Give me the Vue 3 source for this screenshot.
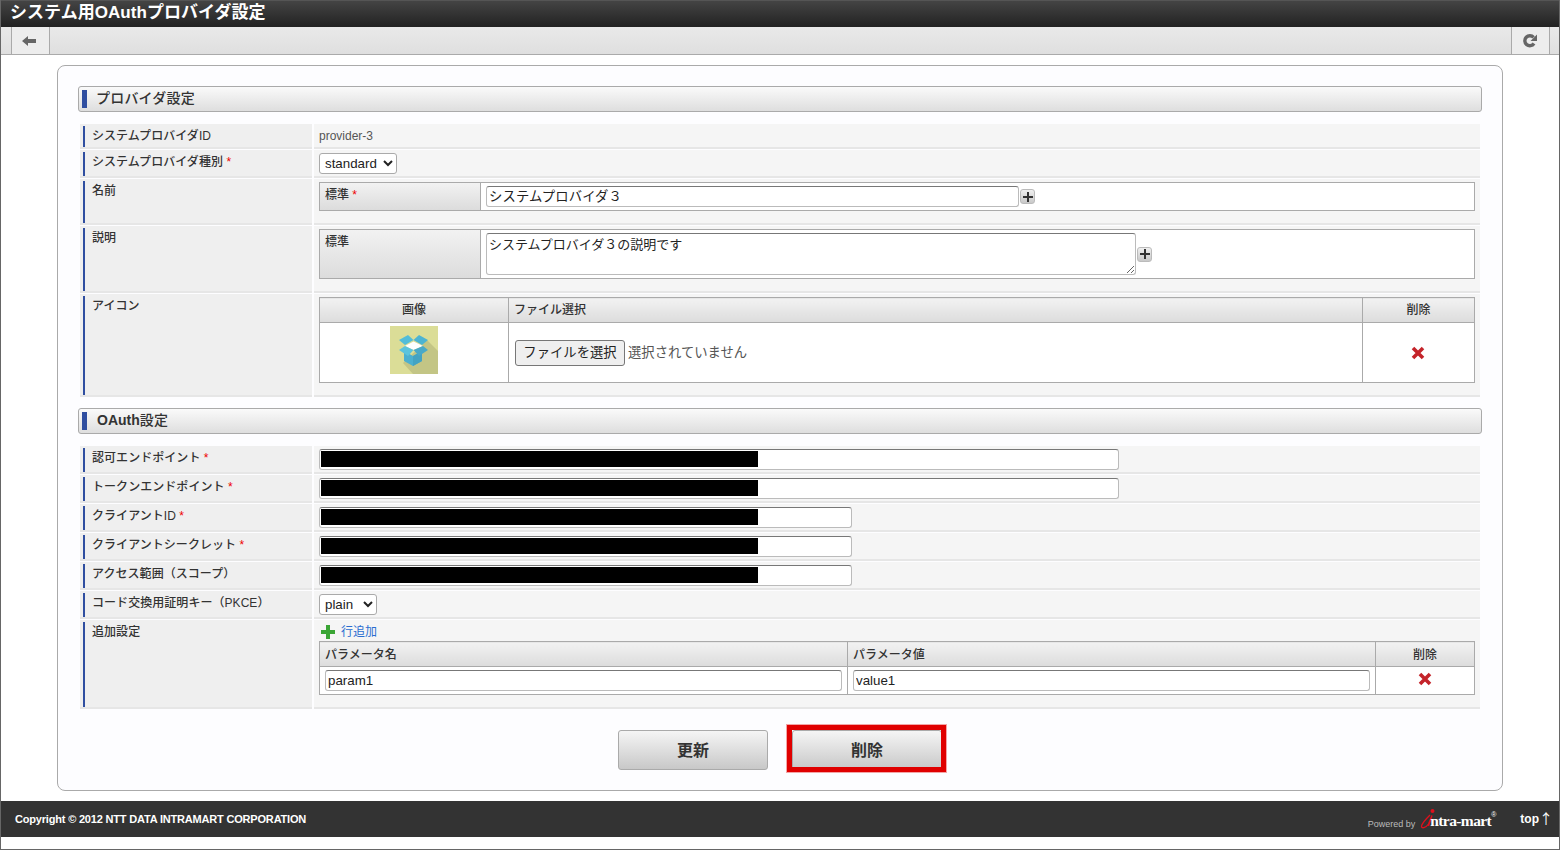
<script setup>
const oauthRows = [
  { label: '認可エンドポイント', wide: true },
  { label: 'トークンエンドポイント', wide: true },
  { label: 'クライアントID', wide: false },
  { label: 'クライアントシークレット', wide: false },
  { label: 'アクセス範囲（スコープ）', wide: false, optional: true },
]
</script>

<template>
  <div class="page">
    <header class="title-bar">システム用OAuthプロバイダ設定</header>

    <nav class="toolbar">
      <a class="tool-btn back">
        <svg width="14" height="10" viewBox="0 0 14 10"><path d="M0 5 6 0V3h8v4H6v3z" fill="#666" /></svg>
      </a>
      <a class="tool-btn reload">
        <svg width="14" height="14" viewBox="0 0 14 14">
          <path d="M11 9.500A5 5 0 1 1 10.600 3.400" fill="none" stroke="#666" stroke-width="3.400" />
          <path d="M14 .5V7H7.500z" fill="#666" />
        </svg>
      </a>
    </nav>

    <main class="panel">
      <h2 class="section"><span>プロバイダ設定</span></h2>

      <div class="rows">
        <div class="row">
          <div class="label"><div>システムプロバイダID</div></div>
          <div class="value plain-text">provider-3</div>
        </div>
        <div class="row">
          <div class="label"><div>システムプロバイダ種別 <i>*</i></div></div>
          <div class="value">
            <select class="sel sel-type"><option>standard</option></select>
          </div>
        </div>
        <div class="row">
          <div class="label"><div>名前</div></div>
          <div class="value tall">
            <div class="locale-box name-box">
              <div class="locale-head">標準 <i>*</i></div>
              <div class="locale-body">
                <input class="txt name-input" value="システムプロバイダ３" />
                <button class="plus"><svg width="10" height="10" viewBox="0 0 10 10"><path d="M4 0h2v4h4v2H6v4H4V6H0V4h4z" fill="#333" /></svg></button>
              </div>
            </div>
          </div>
        </div>
        <div class="row">
          <div class="label"><div>説明</div></div>
          <div class="value tall">
            <div class="locale-box desc-box">
              <div class="locale-head">標準</div>
              <div class="locale-body">
                <textarea class="txt desc-input">システムプロバイダ３の説明です</textarea>
                <button class="plus"><svg width="10" height="10" viewBox="0 0 10 10"><path d="M4 0h2v4h4v2H6v4H4V6H0V4h4z" fill="#333" /></svg></button>
              </div>
            </div>
          </div>
        </div>
        <div class="row">
          <div class="label"><div>アイコン</div></div>
          <div class="value tall">
            <table class="grid-table icon-table">
              <thead>
                <tr>
                  <th class="col-image center">画像</th>
                  <th>ファイル選択</th>
                  <th class="col-del center">削除</th>
                </tr>
              </thead>
              <tbody>
                <tr>
                  <td class="center img-cell">
                    <svg class="box-icon" width="48" height="48" viewBox="0 0 48 48">
                      <rect width="48" height="48" fill="#dbdd97" />
                      <path d="M37 14 48 25V48H23L13 37z" fill="#c3c585" />
                      <path d="M14 25 23 30 32 25V35L23 40 14 35z" fill="#4cb0cf" />
                      <path d="M23 30 32 25V35L23 40z" fill="#44a3c2" />
                      <path d="M9 14 18 9 23.500 14 15 19z" fill="#52bdd9" />
                      <path d="M38 14 29 9 23.500 14 32 19z" fill="#4db4d2" />
                      <path d="M15 20 23.500 15.500 33 20 23.500 24z" fill="#fff" />
                      <path d="M9 24 15 20 23.500 24 18 30z" fill="#5cc4dc" />
                      <path d="M38 24 33 20 23.500 24 29 30z" fill="#4aa9c7" />
                    </svg>
                  </td>
                  <td class="file-cell">
                    <div class="file-pick">
                      <button class="file-btn">ファイルを選択</button>
                      <span>選択されていません</span>
                    </div>
                  </td>
                  <td class="center">
                    <svg class="del-x left" width="14" height="14" viewBox="0 0 14 14"><path d="M2 2 12 12M12 2 2 12" stroke="#c4242a" stroke-width="3.600" /></svg>
                  </td>
                </tr>
              </tbody>
            </table>
          </div>
        </div>
      </div>

      <h2 class="section second"><span><b>OAuth</b>設定</span></h2>

      <div class="rows">
        <div v-for="row in oauthRows" :key="row.label" class="row">
          <div class="label">
            <div>{{ row.label }} <i v-if="!row.optional">*</i></div>
          </div>
          <div class="value">
            <div class="masked" :class="{ wide: row.wide }">
              <input class="txt" value="" />
              <span class="mask"></span>
            </div>
          </div>
        </div>
        <div class="row">
          <div class="label"><div>コード交換用証明キー（PKCE）</div></div>
          <div class="value">
            <select class="sel sel-pkce"><option>plain</option></select>
          </div>
        </div>
        <div class="row">
          <div class="label"><div>追加設定</div></div>
          <div class="value tall">
            <a class="add-row">
              <svg width="14" height="14" viewBox="0 0 14 14"><path d="M5 0h4v5h5v4H9v5H5V9H0V5h5z" fill="#3aa535" /></svg>
              <span>行追加</span>
            </a>
            <table class="grid-table param-table">
              <thead>
                <tr>
                  <th class="col-param">パラメータ名</th>
                  <th class="col-param">パラメータ値</th>
                  <th class="center">削除</th>
                </tr>
              </thead>
              <tbody>
                <tr>
                  <td><input class="txt" value="param1" /></td>
                  <td><input class="txt" value="value1" /></td>
                  <td class="center">
                    <svg class="del-x up" width="14" height="14" viewBox="0 0 14 14"><path d="M2 2 12 12M12 2 2 12" stroke="#c4242a" stroke-width="3.600" /></svg>
                  </td>
                </tr>
              </tbody>
            </table>
          </div>
        </div>
      </div>

      <div class="actions">
        <button class="action">更新</button>
        <div class="marked">
          <button class="action">削除</button>
          <span class="mark"></span>
        </div>
      </div>
    </main>

    <footer class="footer">
      <span class="copyright">Copyright © 2012 NTT DATA INTRAMART CORPORATION</span>
      <span class="powered">Powered by</span>
      <span class="logo">
        <svg width="20" height="22" viewBox="0 0 20 22">
          <circle cx="12.500" cy="3" r="2" fill="#e0101c" />
          <path d="M10 7C6 11 2 15 1.500 18 1 21 6 20 8.500 16L12 7.500 8.500 18" fill="none" stroke="#e0101c" stroke-width="1.300" />
        </svg>
        <span class="logo-text">ntra-mart</span><sup>®</sup>
      </span>
      <a class="top">top <b>↑</b></a>
    </footer>
  </div>
</template>

<style>
html,
body {
  margin: 0;
  background: #fff;
}
</style>

<style scoped>
.page {
  box-sizing: border-box;
  width: 1560px;
  height: 850px;
  display: flex;
  flex-direction: column;
  border: 1px solid #666;
  border-top: 0;
  overflow: hidden;
  background: #fff;
  color: #333;
  font-family: "Liberation Sans", "Noto Sans CJK JP", sans-serif;
  font-size: 12px;
}

.title-bar {
  height: 27px;
  box-sizing: border-box;
  padding-left: 9px;
  border-top: 1px solid #555;
  background: linear-gradient(#444, #222);
  color: #fff;
  font-size: 17px;
  font-weight: 700;
  letter-spacing: 0.05px;
  line-height: 24px;
}

.toolbar {
  height: 28px;
  box-sizing: border-box;
  display: flex;
  justify-content: space-between;
  padding: 0 9px 0 10px;
  border-bottom: 1px solid #aaa;
  background: linear-gradient(#e9e9e9, #dfdfdf);
}
.tool-btn {
  width: 37px;
  display: flex;
  align-items: center;
  justify-content: center;
  border-left: 1px solid #aaa;
  border-right: 1px solid #aaa;
  background: #ededed;
}
.tool-btn.back svg {
  margin: 1px 3px 0 0;
}
.tool-btn.reload svg {
  margin-right: 2px;
}

.panel {
  height: 726px;
  box-sizing: border-box;
  margin: 10px 56px 0;
  padding: 20px 20px 20px;
  border: 1px solid #aaa;
  border-radius: 8px;
  background: #fdfdff;
}

.section {
  height: 26px;
  box-sizing: border-box;
  margin: 0 0 12px;
  padding: 3px 0 0 3px;
  border: 1px solid #aaa;
  border-radius: 3px;
  background: linear-gradient(#fafafa, #dedede);
  font-size: 14px;
  font-weight: 500;
  letter-spacing: 0.2px;
}
.section span {
  display: block;
  height: 18px;
  padding-left: 9px;
  border-left: 5px solid #2f4ea0;
  line-height: 16px;
}
.section b {
  padding-left: 1px;
  font-weight: 700;
  letter-spacing: 0;
}
.section.second {
  margin-top: 11px;
}

.rows {
  margin: 0 2px;
}
.row {
  display: grid;
  grid-template-columns: 232px 1166px;
  gap: 2px;
  margin-bottom: 1px;
}
.label {
  display: flex;
  padding: 2px 0 0 3px;
  border-bottom: 2px solid #e6e6e6;
  background: #efefef;
}
.label > div {
  flex: 1;
  padding: 1px 0 0 7px;
  border-left: 2px solid #2f4ea0;
  font-weight: 500;
  letter-spacing: 0.05px;
  line-height: 18px;
}
.label i,
.locale-head i {
  color: #e00;
  font-style: normal;
}
.value {
  box-sizing: border-box;
  padding: 3px 5px 2px;
  border-bottom: 2px solid #e6e6e6;
  background: #f5f5f5;
}
.value.tall {
  padding-bottom: 12px;
}
.plain-text {
  padding: 4px 5px 2px;
  color: #555;
  line-height: 17px;
}

.sel {
  display: block;
  height: 21px;
  box-sizing: border-box;
  padding: 0 0 0 1px;
  border: 1px solid #aaa;
  border-radius: 3px;
  background: #fff;
  color: #222;
  font: 13.33px "Liberation Sans", sans-serif;
}
.sel-type {
  width: 78px;
}
.sel-pkce {
  width: 58px;
}

.txt {
  display: block;
  width: 100%;
  height: 21px;
  box-sizing: border-box;
  margin: 0;
  padding: 0 2px 1px;
  border: 1px solid #bbb;
  border-top-color: #777;
  border-radius: 3px;
  background: #fff;
  color: #222;
  font: 13.33px "Liberation Sans", "Noto Sans CJK JP", sans-serif;
  outline: none;
}

.locale-box {
  display: flex;
  box-sizing: border-box;
  width: 1156px;
  border: 1px solid #aaa;
  background: #fff;
}
.name-box {
  height: 29px;
}
.desc-box {
  height: 50px;
}
.locale-head {
  width: 161px;
  box-sizing: border-box;
  padding: 3px 5px;
  border-right: 1px solid #aaa;
  background: linear-gradient(#f2f2f2, #dcdcdc);
  font-weight: 500;
  line-height: 18px;
}
.locale-body {
  display: flex;
  align-items: center;
  gap: 1px;
  padding-left: 5px;
}
.name-input {
  width: 533px;
  padding-bottom: 3px;
  letter-spacing: 0.15px;
}
.desc-input {
  width: 650px;
  height: 42px;
  padding-top: 0;
  font-size: 13px;
  resize: both;
}
.plus {
  width: 15px;
  height: 15px;
  display: flex;
  align-items: center;
  justify-content: center;
  padding: 0;
  border: 1px solid #bbb;
  border-radius: 3px;
  background: linear-gradient(#f0f0f0, #c8c8c8);
}

.grid-table {
  width: 1156px;
  table-layout: fixed;
  border-collapse: collapse;
  background: #fff;
}
.grid-table th,
.grid-table td {
  box-sizing: border-box;
  padding: 0 5px;
  border: 1px solid #aaa;
}
.grid-table th {
  height: 25px;
  padding-bottom: 3px;
  background: linear-gradient(#f2f2f2, #dcdcdc);
  font-weight: 500;
  text-align: left;
}
.grid-table th.center,
.grid-table td.center {
  text-align: center;
}
.col-image {
  width: 189px;
}
.col-del {
  width: 112px;
}
.icon-table td {
  height: 60px;
}
.icon-table td.img-cell {
  padding-top: 3px;
  vertical-align: top;
}
.icon-table td.file-cell {
  padding-left: 6px;
}
.box-icon {
  display: block;
  margin: 0 auto;
}
.del-x {
  display: block;
  margin: 0 auto;
}
.del-x.left {
  padding-right: 2px;
}
.del-x.up {
  margin-bottom: 3px;
}
.file-pick {
  display: flex;
  align-items: center;
  gap: 3px;
  color: #555;
  font-size: 13.33px;
}
.file-pick span {
  padding-bottom: 3px;
}
.file-btn {
  width: 110px;
  height: 26px;
  padding: 0 0 3px;
  border: 1px solid #777;
  border-radius: 3px;
  background: #efefef;
  color: #222;
  font: 13.33px "Noto Sans CJK JP", sans-serif;
}

.masked {
  position: relative;
  width: 533px;
}
.masked.wide {
  width: 800px;
}
.mask {
  position: absolute;
  left: 2px;
  top: 2px;
  width: 437px;
  height: 16px;
  background: #000;
}

.add-row {
  display: flex;
  align-items: center;
  gap: 6px;
  height: 18px;
  padding-left: 2px;
  color: #2a6dd0;
}
.add-row span {
  margin-bottom: 3px;
}
.col-param {
  width: 528px;
}
.param-table th {
  padding-bottom: 1px;
}
.param-table td {
  height: 28px;
}

.actions {
  display: flex;
  justify-content: center;
  gap: 24px;
  margin-top: 21px;
}
.action {
  display: block;
  width: 150px;
  height: 40px;
  padding: 0 0 2px;
  border: 1px solid #aaa;
  border-radius: 3px;
  background: linear-gradient(#f5f5f5, #c8c8c8);
  color: #333;
  font: 700 16px "Noto Sans CJK JP", sans-serif;
}
.marked {
  position: relative;
}
.mark {
  position: absolute;
  left: -5px;
  top: -5px;
  width: 159px;
  height: 47px;
  box-sizing: border-box;
  border: 5px solid #e00000;
  box-shadow: 0 0 0 1px rgba(224, 0, 0, 0.35);
}

.footer {
  height: 36px;
  margin-top: 10px;
  display: flex;
  align-items: center;
  padding: 0 9px 0 14px;
  background: #333;
  color: #fff;
}
.copyright {
  flex: 1;
  font-size: 11px;
  font-weight: 700;
  letter-spacing: -0.185px;
}
.powered {
  margin-top: 10px;
  color: #bbb;
  font-size: 9px;
}
.logo {
  display: flex;
  align-items: flex-start;
  margin: 0 24px 0 5px;
}
.logo-text {
  margin: 4px 0 0 -10px;
  font: 700 15.5px "Liberation Serif", serif;
  letter-spacing: -0.6px;
  line-height: 18px;
}
.logo sup {
  margin-top: 3px;
  font-size: 7px;
  line-height: 8px;
}
.top {
  display: flex;
  align-items: center;
  gap: 3px;
  font-size: 12px;
  font-weight: 700;
}
.top b {
  width: 8px;
  display: flex;
  justify-content: center;
  margin-top: -2px;
  font: 400 14px "Noto Sans CJK JP", sans-serif;
}
</style>
